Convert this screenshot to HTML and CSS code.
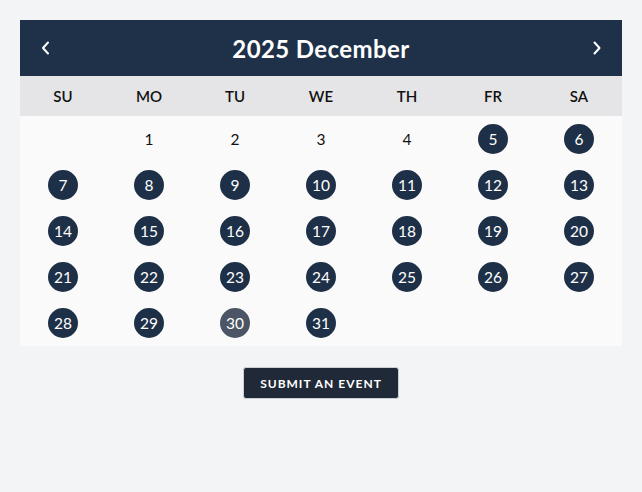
FILE: index.html
```html
<!DOCTYPE html>
<html>
<head>
<meta charset="utf-8">
<link rel="stylesheet" href="styles.css">
</head>
<body>
<div class="page">
  <div class="calendar">
    <div class="cal-header">
      <span class="nav"><svg width="10" height="14" viewBox="0 0 10 14"><path d="M8 1.5 L3 7 L8 12.5" fill="none" stroke="#fff" stroke-width="2" stroke-linecap="round" stroke-linejoin="round"/></svg></span>
      <span class="title">2025 December</span>
      <span class="nav"><svg width="10" height="14" viewBox="0 0 10 14"><path d="M2.5 1.5 L7.5 7 L2.5 12.5" fill="none" stroke="#fff" stroke-width="2" stroke-linecap="round" stroke-linejoin="round"/></svg></span>
    </div>
    <div class="weekdays">
      <span>SU</span><span>MO</span><span>TU</span><span>WE</span><span>TH</span><span>FR</span><span>SA</span>
    </div>
    <div class="days">
      <span class="day"></span>
      <span class="day"><b class="plain">1</b></span>
      <span class="day"><b class="plain">2</b></span>
      <span class="day"><b class="plain">3</b></span>
      <span class="day"><b class="plain">4</b></span>
      <span class="day"><b class="ev">5</b></span>
      <span class="day"><b class="ev">6</b></span>
      <span class="day"><b class="ev">7</b></span>
      <span class="day"><b class="ev">8</b></span>
      <span class="day"><b class="ev">9</b></span>
      <span class="day"><b class="ev">10</b></span>
      <span class="day"><b class="ev">11</b></span>
      <span class="day"><b class="ev">12</b></span>
      <span class="day"><b class="ev">13</b></span>
      <span class="day"><b class="ev">14</b></span>
      <span class="day"><b class="ev">15</b></span>
      <span class="day"><b class="ev">16</b></span>
      <span class="day"><b class="ev">17</b></span>
      <span class="day"><b class="ev">18</b></span>
      <span class="day"><b class="ev">19</b></span>
      <span class="day"><b class="ev">20</b></span>
      <span class="day"><b class="ev">21</b></span>
      <span class="day"><b class="ev">22</b></span>
      <span class="day"><b class="ev">23</b></span>
      <span class="day"><b class="ev">24</b></span>
      <span class="day"><b class="ev">25</b></span>
      <span class="day"><b class="ev">26</b></span>
      <span class="day"><b class="ev">27</b></span>
      <span class="day"><b class="ev">28</b></span>
      <span class="day"><b class="ev">29</b></span>
      <span class="day"><b class="ev today">30</b></span>
      <span class="day"><b class="ev">31</b></span>
    </div>
  </div>
  <div class="actions">
    <button class="submit">SUBMIT AN EVENT</button>
  </div>
</div>
</body>
</html>
```
FILE: styles.css
```css
html, body {
  margin: 0;
  padding: 0;
  background: #f3f4f6;
  font-family: "Lato", "Noto Sans", sans-serif;
}
.page {
  padding: 20px;
}
.calendar {
  width: 602px;
}
.cal-header {
  height: 56px;
  background: #1f3149;
  display: flex;
  align-items: center;
  justify-content: space-between;
  padding: 0 20px;
  box-sizing: border-box;
}
.nav {
  display: flex;
  width: 10px;
  height: 14px;
}
.title {
  color: #fff;
  font-size: 24px;
  font-weight: 700;
  letter-spacing: 0.4px;
}
.weekdays {
  height: 40px;
  background: #e5e5e7;
  display: grid;
  grid-template-columns: repeat(7, 1fr);
  align-items: center;
  text-align: center;
  font-size: 15px;
  font-weight: 600;
  color: #111;
}
.days {
  background: #fafafa;
  display: grid;
  grid-template-columns: repeat(7, 1fr);
  grid-auto-rows: 46px;
}
.day {
  display: flex;
  align-items: center;
  justify-content: center;
}
.day b {
  width: 30px;
  height: 30px;
  border-radius: 50%;
  display: flex;
  align-items: center;
  justify-content: center;
  font-size: 15.5px;
  font-weight: 400;
}
.plain {
  color: #111;
}
.ev {
  background: #1e3047;
  color: #fff;
}
.ev.today {
  background: #4b5565;
}
.actions {
  display: flex;
  justify-content: center;
  padding-top: 21px;
}
.submit {
  width: 156px;
  height: 32px;
  background: #1f2937;
  color: #fff;
  border: 1px solid #cbd0d6;
  border-radius: 3px;
  font-family: "Lato", "Noto Sans", sans-serif;
  font-size: 12px;
  font-weight: 700;
  letter-spacing: 1px;
  padding: 0;
}
```
